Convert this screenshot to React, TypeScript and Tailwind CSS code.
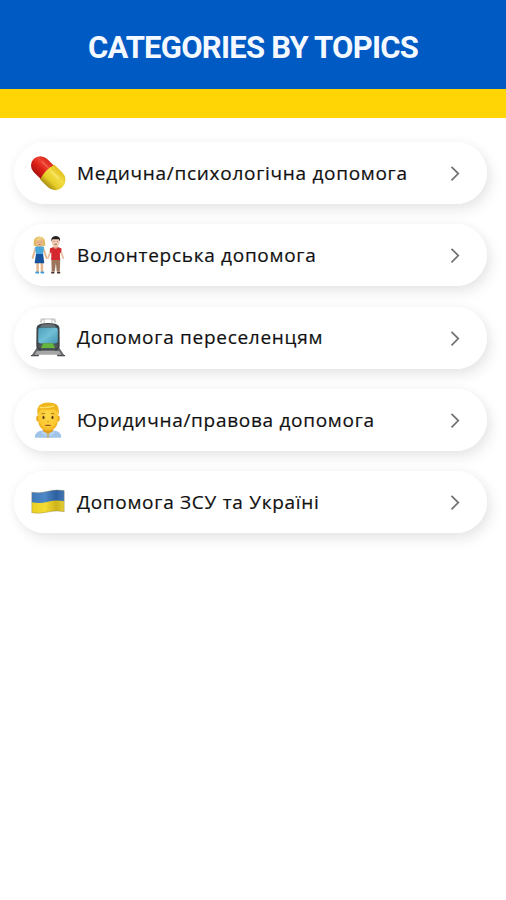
import React from 'react';

const PillIcon = () => (
  <svg width="36" height="40" viewBox="0 0 36 40">
    <defs>
      <linearGradient id="pillRed" x1="0" y1="0" x2="0" y2="1">
        <stop offset="0" stopColor="#d9281c" />
        <stop offset="0.3" stopColor="#ee4232" />
        <stop offset="0.6" stopColor="#dc1f16" />
        <stop offset="1" stopColor="#a81410" />
      </linearGradient>
      <linearGradient id="pillYellow" x1="0" y1="0" x2="0" y2="1">
        <stop offset="0" stopColor="#e3bf1d" />
        <stop offset="0.35" stopColor="#f3dd45" />
        <stop offset="0.7" stopColor="#e6cd26" />
        <stop offset="1" stopColor="#a88c12" />
      </linearGradient>
    </defs>
    <g transform="translate(18 19.9) rotate(44)">
      <path d="M0 -9.4H-10.6A9.4 9.4 0 0 0 -10.6 9.4H0Z" fill="url(#pillRed)" />
      <path d="M-1 -10.3H10A10.3 10.3 0 0 1 10 10.3H-1Q-4.5 0 -1 -10.3Z" fill="url(#pillYellow)" />
      <path d="M-12 -4H-4" stroke="#ff9c89" strokeWidth="1.3" strokeLinecap="round" opacity="0.35" />
      <path d="M2 -3.5H11" stroke="#fff6a5" strokeWidth="2" strokeLinecap="round" opacity="0.35" />
    </g>
  </svg>
);

const CoupleIcon = () => (
  <svg width="36" height="40" viewBox="0 0 36 40">
    <g fill="none" strokeLinecap="round">
      <path d="M5.5 13.5L2.6 23M13.3 13.5L16.6 23" stroke="#e5b58c" strokeWidth="1.9" />
      <path d="M21.3 14L18.2 23M30 14L33.2 23" stroke="#e9c3a6" strokeWidth="1.9" />
      <path d="M7.6 26V36M11.9 26V36" stroke="#e5b58c" strokeWidth="2.5" />
      <path d="M6.2 37.5H8.2M11.4 37.5H13.3" stroke="#3d9bd2" strokeWidth="2" />
    </g>
    <path d="M5 12Q9.5 10 14 12L12.9 21H6.1Z" fill="#49a9df" />
    <path d="M6 19H13.1L14.3 28.2H4.6Z" fill="#17529c" />
    <path d="M3.8 7Q4 1.7 9.4 1.6Q14.8 1.7 15 7L15.3 10.4Q9.5 12.5 3.7 10.4Z" fill="#dfb75c" />
    <ellipse cx="9.6" cy="7.3" rx="3.5" ry="4" fill="#eabb91" />
    <path d="M6 5.8Q10 5.3 11.6 3.5L13.4 6V3.2Q9 0.5 5.7 4Z" fill="#eed080" />
    <path d="M21.3 23H30.3L29.8 36.5H26.7L25.9 28L24.8 36.5H21.7Z" fill="#9d755c" />
    <path d="M19.8 13.5Q25.7 9.8 31.5 13.5L31 18L29.9 17.5L30 25H21.3V17.5L20.2 18Z" fill="#d42730" />
    <path d="M21.2 37.6H24.4M27 37.6H30.2" stroke="#4d342f" strokeWidth="1.6" />
    <path d="M23.4 10H27.8V12.5Q25.6 15 23.4 12.5Z" fill="#dfaa8c" />
    <ellipse cx="25.6" cy="7" rx="4" ry="4.8" fill="#f0cbb1" />
    <path d="M21.3 6.5Q20.7 1.2 25.8 1.1Q30.8 1.3 30 6.5L28.8 4.2H22.6Z" fill="#25201e" />
    <path d="M23.8 6.6H24.5M27 6.6H27.7M24.6 9.3H26.8" stroke="#6d3e32" strokeWidth="0.8" />
    <path d="M7.8 7H8.5M10.8 7H11.5M8.8 9.5H10.6" stroke="#865133" strokeWidth="0.7" />
  </svg>
);

const TrainIcon = () => (
  <svg width="36" height="40" viewBox="0 0 36 40">
    <defs>
      <linearGradient id="trainGlass" x1="0" y1="0" x2="1" y2="1">
        <stop offset="0" stopColor="#4c9dba" />
        <stop offset="0.5" stopColor="#70bfd6" />
        <stop offset="1" stopColor="#4595b2" />
      </linearGradient>
    </defs>
    <path d="M11 5V1H25V5M14 5V1M22 5V1M10 4L13.5 1M26 4L22.5 1" fill="none" stroke="#b9b9b9" strokeWidth="0.9" />
    <path d="M7.3 29L1.2 38H8.5L12 31ZM28.7 29L34.8 38H27.5L24 31Z" fill="#68696b" />
    <path d="M7 33H29L31.5 36.8H4.5Z" fill="#a5a6a8" />
    <path d="M1 37.7H8.5M27.5 37.7H35" stroke="#484a4c" strokeWidth="1.3" />
    <path d="M11 5.8Q18 4.4 25 5.8Q29 6.8 29.5 10L29.7 27.5Q29.7 32 25.5 32.8H10.5Q6.3 32 6.3 27.5L6.5 10Q7 6.8 11 5.8Z" fill="#3f4548" />
    <path d="M12 6.7Q18 5.5 24 6.7L26 9H10Z" fill="#697277" />
    <rect x="8.2" y="9.5" width="19.6" height="16" rx="2.5" fill="url(#trainGlass)" />
    <path d="M8.5 26.3H27.5V28.6Q27 30.6 24.5 31H11.5Q9 30.6 8.5 28.6Z" fill="#525a58" />
    <path d="M13 25.2H23L24.8 30H11.2Z" fill="#63b53e" />
  </svg>
);

const OfficerIcon = () => (
  <svg width="36" height="40" viewBox="0 0 36 40">
    <defs>
      <radialGradient id="faceGold" cx="0.5" cy="0.4" r="0.62">
        <stop offset="0" stopColor="#ffd94a" />
        <stop offset="0.75" stopColor="#fbc730" />
        <stop offset="1" stopColor="#eba51c" />
      </radialGradient>
    </defs>
    <path d="M4.8 37.8Q4.8 31.8 11 30.8L18 29L25.2 30.8Q31.3 31.8 31.3 37.8Z" fill="#9fc4e8" />
    <path d="M13 28H23V31.5L18 34.3L13 31.5Z" fill="#dd9b1c" />
    <path d="M12 30.8L18 34L15 36.3L10.8 32ZM24 30.8L18 34L21 36.3L25.2 32Z" fill="#b4d1ed" />
    <path d="M18 34V38" stroke="#d6a64a" strokeWidth="1.3" />
    <ellipse cx="7.9" cy="18.5" rx="1.7" ry="3" fill="#edaa20" />
    <ellipse cx="28.1" cy="18.5" rx="1.7" ry="3" fill="#edaa20" />
    <path d="M8.2 14Q8.2 4.2 18 4.2Q27.8 4.2 27.8 14V20C27.8 26.5 23.5 31.2 18 31.2S8.2 26.5 8.2 20Z" fill="url(#faceGold)" />
    <path d="M7.6 15.5Q5.8 6 12 3.7Q17 1.3 24 3.3Q30.5 5.5 28.5 15.5L27.3 11.5Q26 9 23.5 9.2Q16 10.3 11 9.2Q9 10.5 7.6 15.5Z" fill="#efb51d" />
    <path d="M9.5 7.5Q17 8.2 24 5.8" stroke="#ffe06a" strokeWidth="1.3" fill="none" />
    <path d="M11.6 14Q13.2 12.9 15 13.8M21 13.8Q22.8 12.9 24.4 14" stroke="#9b681a" strokeWidth="0.9" fill="none" />
    <ellipse cx="13.5" cy="17.5" rx="1.1" ry="1.8" fill="#624018" />
    <ellipse cx="22.5" cy="17.5" rx="1.1" ry="1.8" fill="#624018" />
    <path d="M16.7 21.2Q18 22 19.3 21.2" stroke="#d99422" strokeWidth="0.8" fill="none" />
    <path d="M15.8 25.4H20.2" stroke="#985524" strokeWidth="1.2" strokeLinecap="round" />
  </svg>
);

const FlagIcon = () => (
  <svg width="36" height="40" viewBox="0 0 36 40">
    <defs>
      <linearGradient id="flagBlue">
        <stop offset="0" stopColor="#3f78b8" />
        <stop offset="0.4" stopColor="#4d87c6" />
        <stop offset="0.75" stopColor="#2e60a0" />
        <stop offset="1" stopColor="#4376b4" />
      </linearGradient>
      <linearGradient id="flagYellow">
        <stop offset="0" stopColor="#ebcf22" />
        <stop offset="0.4" stopColor="#f5dc32" />
        <stop offset="0.75" stopColor="#cfb41a" />
        <stop offset="1" stopColor="#e3cd35" />
      </linearGradient>
    </defs>
    <path d="M1.8 10.3Q10 11.6 18 9.3Q26 7 34.2 8.6V19.5Q26 18 18 20.2Q10 22.4 1.8 20.7Z" fill="url(#flagBlue)" />
    <path d="M1.8 20.3Q10 22 18 19.8Q26 17.6 34.2 19.2V29.7Q26 28 18 30Q10 32.2 1.8 30.8Z" fill="url(#flagYellow)" />
    <path d="M1.8 10.3Q10 11.6 18 9.3Q26 7 34.2 8.6V29.7Q26 28 18 30Q10 32.2 1.8 30.8Z" fill="none" stroke="#85794b" strokeWidth="0.5" opacity="0.7" />
  </svg>
);

const categories = [
  { title: 'Медична/психологічна допомога', icon: PillIcon },
  { title: 'Волонтерська допомога', icon: CoupleIcon },
  { title: 'Допомога переселенцям', icon: TrainIcon },
  { title: 'Юридична/правова допомога', icon: OfficerIcon },
  { title: 'Допомога ЗСУ та Україні', icon: FlagIcon },
];

export default function App() {
  return (
    <div className="min-h-[900px] w-full bg-white">
      <header className="h-[118px] border-b-[29px] border-[#ffd505] bg-[#005ac4]">
        <h1 className="pt-7 text-center font-['Roboto',sans-serif] text-[31px] leading-[40px] font-bold tracking-[-0.75px] text-[#f4f8ff]">
          CATEGORIES BY TOPICS
        </h1>
      </header>

      <main className="flex flex-col gap-[20.3px] pt-6 pr-[19px] pl-[14px]">
        {categories.map(({ title, icon: Icon }) => (
          <div key={title} className="rounded-full shadow-[4px_6px_14px_rgba(0,0,0,0.09),0_0_12px_rgba(0,0,0,0.03)]">
            {/* relative keeps each pill above the shadow of the next one */}
            <button className="relative z-10 flex h-[62px] w-full items-center rounded-full bg-white pl-4 text-left">
              <Icon />
              <span className="ml-[11px] flex-1 font-['Open_Sans',sans-serif] text-[19px] font-medium tracking-[0.71px] whitespace-nowrap text-[#111] [-webkit-text-stroke:0.2px_#111]">
                {title}
              </span>
              <svg className="mr-[26px]" width="12" height="18" viewBox="0 0 12 18" fill="none">
                <path d="M2.5 2.8L9.3 9.6L2.5 16.3" stroke="#707070" strokeWidth="1.7" />
              </svg>
            </button>
          </div>
        ))}
      </main>
    </div>
  );
}
